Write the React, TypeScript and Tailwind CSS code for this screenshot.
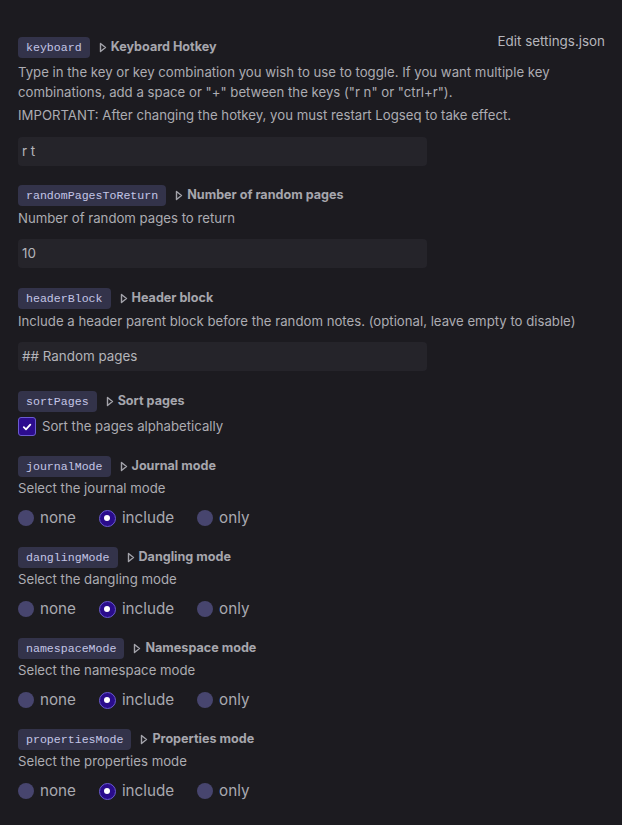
const sans = "font-['Inter','Noto_Sans',sans-serif]";
const mono = "font-['Liberation_Mono','DejaVu_Sans_Mono',monospace]";

const Caret = () => (
  <svg width="8" height="11" viewBox="0 0 8 11" className="shrink-0">
    <path d="M1.5 1.5 L6.5 5.5 L1.5 9.5 Z" fill="none" stroke="#a3a3aa" strokeWidth="1.4" strokeLinejoin="round" />
  </svg>
);

const Heading = ({ code, title, extra }: { code: string; title: string; extra?: React.ReactNode }) => (
  <div className="flex items-center h-[21px]">
    <span className={`${mono} text-[11.6px] text-[#c3c5e6] bg-[#33334a] rounded-[4px] h-[21px] px-[8px] flex items-center`}>
      {code}
    </span>
    <span className="ml-[9px] mr-[4px] flex items-center">
      <Caret />
    </span>
    <span className="text-[12.6px] font-bold text-[#a6a6ad]">{title}</span>
    {extra}
  </div>
);

const Desc = ({ children, className = "" }: { children: React.ReactNode; className?: string }) => (
  <p className={`text-[13.2px] leading-[20px] text-[#acacb2] ${className}`}>{children}</p>
);

const TextInput = ({ value, className = "" }: { value: string; className?: string }) => (
  <div className={`w-[409px] h-[29px] rounded-[4px] bg-[#25242a] flex items-center px-[4px] text-[13.4px] text-[#b4b4ba] ${className}`}>
    {value}
  </div>
);

const Radio = ({ checked }: { checked?: boolean }) =>
  checked ? (
    <span className="w-[17px] h-[17px] rounded-full bg-[#2a0c8c] border border-[#6a5bd0] flex items-center justify-center">
      <span className="w-[6px] h-[6px] rounded-full bg-white" />
    </span>
  ) : (
    <span className="w-[16px] h-[16px] rounded-full bg-[#47456e]" />
  );

const RadioRow = () => (
  <div className="flex items-center gap-[23px] mt-[12px] h-[17px] text-[15.2px] text-[#a9a9b0]">
    <label className="flex items-center gap-[6px]">
      <Radio />
      <span>none</span>
    </label>
    <label className="flex items-center gap-[6px]">
      <Radio checked />
      <span>include</span>
    </label>
    <label className="flex items-center gap-[6px]">
      <Radio />
      <span>only</span>
    </label>
  </div>
);

const modes = [
  { code: "journalMode", title: "Journal mode", desc: "Select the journal mode" },
  { code: "danglingMode", title: "Dangling mode", desc: "Select the dangling mode" },
  { code: "namespaceMode", title: "Namespace mode", desc: "Select the namespace mode" },
  { code: "propertiesMode", title: "Properties mode", desc: "Select the properties mode" },
];

export default function App() {
  return (
    <div className={`${sans} bg-[#1c1b20] min-h-[825px] w-full pl-[18px] pr-[17px] pt-[37px]`}>
      {/* keyboard */}
      <div className="mb-[19px]">
        <Heading
          code="keyboard"
          title="Keyboard Hotkey"
          extra={
            <span className="ml-auto self-start -mt-[6px] text-[13.4px] text-[#b6b6bc]">Edit settings.json</span>
          }
        />
        <Desc className="mt-[4px]">
          Type in the key or key combination you wish to use to toggle. If you want multiple key combinations, add a
          space or "+" between the keys ("r n" or "ctrl+r").
        </Desc>
        <Desc className="mt-[3px]">IMPORTANT: After changing the hotkey, you must restart Logseq to take effect.</Desc>
        <TextInput value="r t" className="mt-[12px]" />
      </div>

      <div className="mb-[20px]">
        <Heading code="randomPagesToReturn" title="Number of random pages" />
        <Desc className="mt-[2px]">Number of random pages to return</Desc>
        <TextInput value="10" className="mt-[11px]" />
      </div>

      <div className="mb-[20px]">
        <Heading code="headerBlock" title="Header block" />
        <Desc className="mt-[2px]">Include a header parent block before the random notes. (optional, leave empty to disable)</Desc>
        <TextInput value="## Random pages" className="mt-[11px]" />
      </div>

      <div className="mb-[19px]">
        <Heading code="sortPages" title="Sort pages" />
        <label className="flex items-center gap-[6px] mt-[5px]">
          <span className="w-[18px] h-[19px] rounded-[3px] bg-[#2c0c8e] border border-[#6a5bd0] flex items-center justify-center">
            <svg width="10" height="10" viewBox="0 0 10 10">
              <path d="M1.8 5.2 L4 7.3 L8.3 2.6" fill="none" stroke="white" strokeWidth="1.8" strokeLinecap="round" strokeLinejoin="round" />
            </svg>
          </span>
          <span className="text-[13.2px] text-[#acacb2]">Sort the pages alphabetically</span>
        </label>
      </div>

      {modes.map((m) => (
        <div key={m.code} className="mb-[20px]">
          <Heading code={m.code} title={m.title} />
          <Desc className="mt-[1px]">{m.desc}</Desc>
          <RadioRow />
        </div>
      ))}
    </div>
  );
}
